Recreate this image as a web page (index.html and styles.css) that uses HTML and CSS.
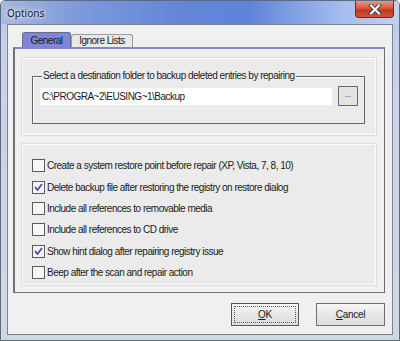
FILE: index.html
```html
<html>
    <head>
        <link rel="stylesheet" href="styles.css">
    </head>
    <body>
        <div class="window">
            <div class="titleBar">
                <span class="titleText">Options</span>
                <div class="closeBtn">
                    <svg width="14" height="11" viewBox="0 0 14 11">
                        <path d="M3 1.5 L11 9.5 M11 1.5 L3 9.5" stroke="#4a4a4a" stroke-width="4" stroke-linecap="square"/>
                        <path d="M3 1.5 L11 9.5 M11 1.5 L3 9.5" stroke="#ffffff" stroke-width="2" stroke-linecap="square"/>
                    </svg>
                </div>
            </div>
            <div class="client">
                <div class="tabStrip">
                    <div class="tab tabActive">General</div>
                    <div class="tab">Ignore Lists</div>
                </div>
                <div class="tabPanel">
                    <div class="innerBox boxFolder">
                        <fieldset class="groupBox">
                            <legend>Select a destination folder to backup deleted entries by repairing</legend>
                            <div class="folderRow">
                                <div class="pathField">C:\PROGRA~2\EUSING~1\Backup</div>
                                <div class="browseBtn">...</div>
                            </div>
                        </fieldset>
                    </div>
                    <div class="innerBox boxChecks">
                        <div class="checkRow"><span class="checkBox"></span>Create a system restore point before repair (XP, Vista, 7, 8, 10)</div>
                        <div class="checkRow"><span class="checkBox checked"><svg width="11" height="11" viewBox="0 0 11 11"><path d="M2 5 L4.5 8 L9 2" stroke="#3a3ad0" stroke-width="1.6" fill="none"/></svg></span>Delete backup file after restoring the registry on restore dialog</div>
                        <div class="checkRow"><span class="checkBox"></span>Include all references to removable media</div>
                        <div class="checkRow"><span class="checkBox"></span>Include all references to CD drive</div>
                        <div class="checkRow"><span class="checkBox checked"><svg width="11" height="11" viewBox="0 0 11 11"><path d="M2 5 L4.5 8 L9 2" stroke="#3a3ad0" stroke-width="1.6" fill="none"/></svg></span>Show hint dialog after repairing registry issue</div>
                        <div class="checkRow"><span class="checkBox"></span>Beep after the scan and repair action</div>
                    </div>
                </div>
                <div class="buttonRow">
                    <div class="dlgBtn defaultBtn"><span class="focusRect"><u>O</u>K</span></div>
                    <div class="dlgBtn"><span><u>C</u>ancel</span></div>
                </div>
            </div>
        </div>
    </body>
</html>
```

FILE: styles.css
```css
html, body {
  margin: 0;
  padding: 0;
  width: 400px;
  height: 341px;
  overflow: hidden;
  background: #ffffff;
}
body {
  font-family: "Liberation Sans", Arial, sans-serif;
  font-size: 10px;
  letter-spacing: -0.5px;
  color: #1a1a1a;
}
.window {
  box-sizing: border-box;
  width: 400px;
  height: 341px;
  display: flex;
  flex-direction: column;
  border: 1px solid #5e6a80;
  border-radius: 5px 5px 0 0;
  background: linear-gradient(to bottom, #a7bde8 0px, #c6d2ea 40px, #d2d7e0 100%);
}
.titleBar {
  height: 23px;
  display: flex;
  align-items: flex-start;
  background: linear-gradient(to right, #a8b9dc 0%, #7f9bdb 18%, #6386d8 45%, #5e83d8 62%, #a3bbee 85%, #c2d3f3 100%);
  border-radius: 4px 4px 0 0;
}
.titleText {
  font-family: "Noto Sans", sans-serif;
  font-size: 10px;
  letter-spacing: 0;
  margin: 5px 0 0 6px;
  color: #1a1a1a;
  text-shadow: 0 0 6px #ffffff, 0 0 3px #e8eefc;
}
.closeBtn {
  margin-left: auto;
  margin-right: 5px;
  width: 39px;
  height: 17px;
  box-sizing: border-box;
  border: 1px solid #6b2b1f;
  border-top: none;
  border-radius: 0 0 4px 4px;
  background: linear-gradient(to bottom, #e39a86 0%, #d45b40 45%, #c0381f 55%, #d0533a 100%);
  display: flex;
  align-items: center;
  justify-content: center;
}
.client {
  flex: 1;
  margin: 0 6px 5px 6px;
  box-sizing: border-box;
  border: 1px solid #7b8597;
  background: #f0f0f0;
  display: flex;
  flex-direction: column;
  padding: 7px 7px 0 5px;
}
.tabStrip {
  display: flex;
  align-items: flex-end;
  height: 15px;
  padding-left: 9px;
}
.tab {
  box-sizing: border-box;
  height: 13px;
  padding: 0 7px;
  line-height: 12px;
  border: 1px solid #9b9b9b;
  border-bottom: none;
  border-radius: 3px 3px 0 0;
  background: #e9e9e9;
}
.tabActive {
  height: 15px;
  line-height: 15px;
  width: 49px;
  padding: 0;
  text-align: center;
  background: #7f86d9;
  border-color: #6a6a8a;
}
.tab + .tab {
  width: 62px;
  padding: 0;
  text-align: center;
}
.tabPanel {
  height: 246px;
  box-sizing: border-box;
  border: 1px solid #6e6e6e;
  border-top: 2px solid #7f86d9;
  border-left: 2px solid #707070;
  padding: 9px 8px 0 7px;
  display: flex;
  flex-direction: column;
  gap: 9px;
}
.innerBox {
  box-sizing: border-box;
  border: 1px solid #fbfbfb;
  box-shadow: 0 0 0 1px #dcdcdc;
  background: #ebebeb;
}
.boxFolder {
  height: 77px;
  padding: 11px 10px 0 9px;
}
.groupBox {
  margin: 0;
  padding: 4px 6px 0 7px;
  height: 54px;
  box-sizing: border-box;
  border: 1px solid #666666;
  box-shadow: inset 1px 1px 0 #ffffff;
}
.groupBox legend {
  padding: 0 1px;
  margin-left: 2px;
  line-height: 12px;
}
.folderRow {
  display: flex;
  align-items: center;
  gap: 6px;
}
.pathField {
  flex: 1;
  height: 17px;
  line-height: 17px;
  background: #ffffff;
  padding-left: 2px;
  box-sizing: border-box;
}
.browseBtn {
  width: 20px;
  height: 20px;
  box-sizing: border-box;
  border: 1px solid #6a6a6a;
  background: #e3e3e3;
  text-align: center;
  line-height: 15px;
  font-size: 8px;
  letter-spacing: 0;
}
.boxChecks {
  height: 141px;
  padding: 10px 0 0 9px;
}
.checkRow {
  height: 21.4px;
  display: flex;
  align-items: center;
  gap: 2px;
}
.checkBox {
  width: 13px;
  height: 13px;
  box-sizing: border-box;
  border: 1px solid #5a5a5a;
  background: #f6f6f6;
  display: flex;
  align-items: center;
  justify-content: center;
}
.buttonRow {
  display: flex;
  justify-content: flex-end;
  gap: 17px;
  margin-top: 10px;
}
.dlgBtn {
  width: 69px;
  height: 23px;
  box-sizing: border-box;
  border: 1px solid #6e6e6e;
  background: linear-gradient(to bottom, #f6f6f6 0%, #e7e7e7 50%, #dcdcdc 100%);
  display: flex;
  align-items: center;
  justify-content: center;
  font-size: 10px;
  letter-spacing: -0.3px;
}
.defaultBtn {
  width: 68px;
  border-color: #555555;
  padding: 2px;
}
.focusRect {
  flex: 1;
  align-self: stretch;
  border: 1px dotted #555555;
  display: flex;
  align-items: center;
  justify-content: center;
}
```
